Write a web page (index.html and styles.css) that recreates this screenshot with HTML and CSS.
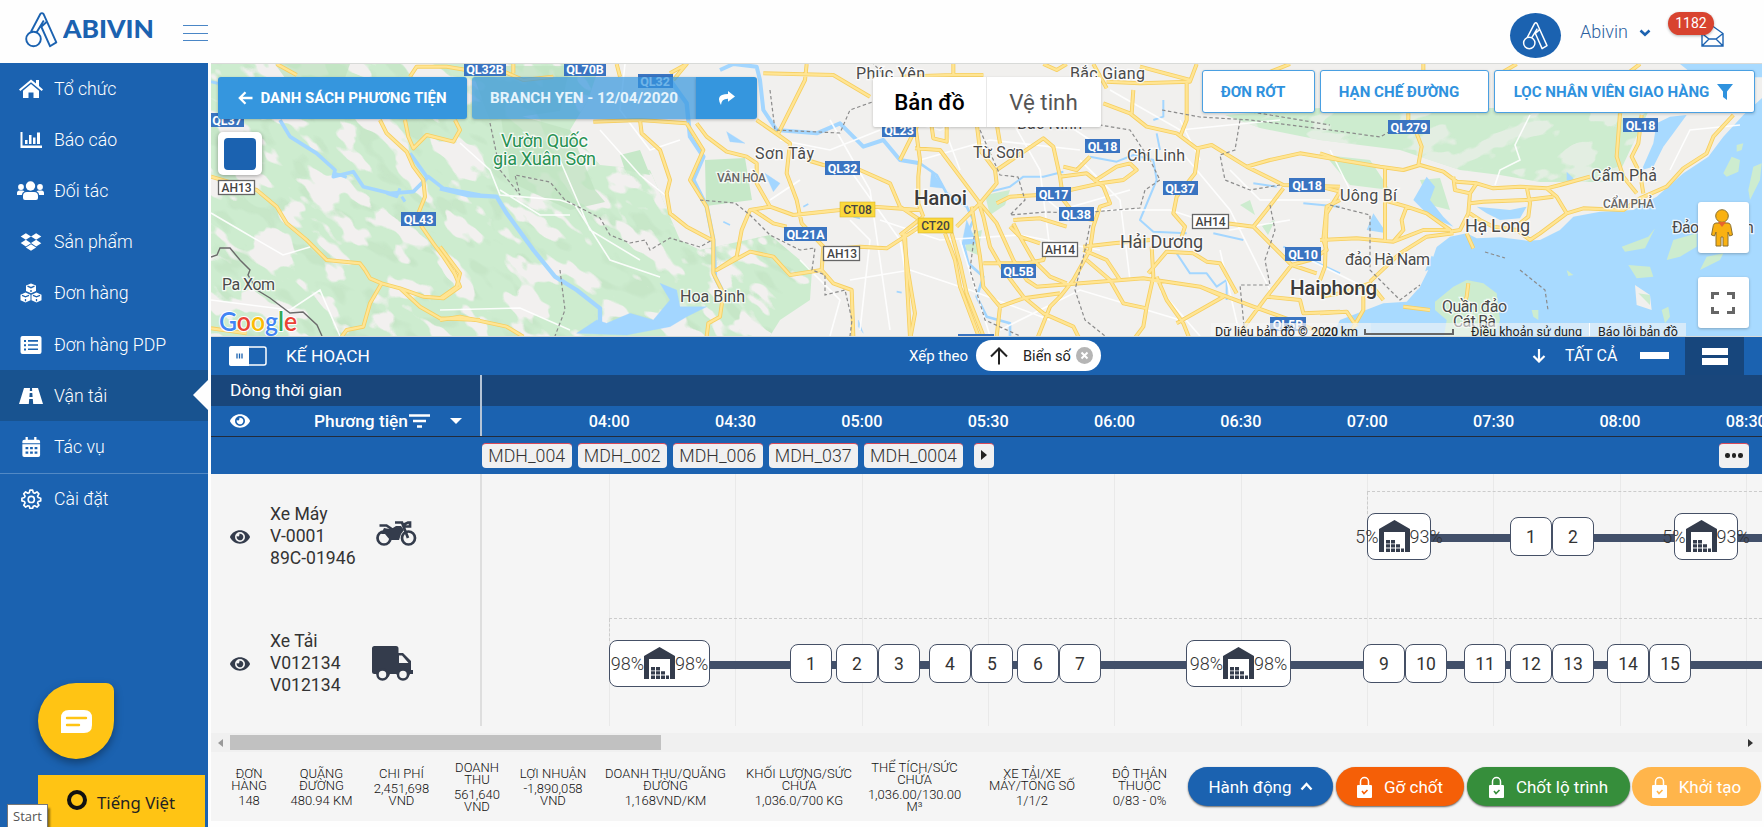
FILE: index.html
```html
<!DOCTYPE html>
<html lang="vi">
<head>
<meta charset="utf-8">
<title>Abivin - Vận tải</title>
<link rel="stylesheet" href="styles.css">
</head>
<body>
<svg class="defs" width="0" height="0">
  <symbol id="eye" viewBox="0 0 576 512"><path d="M572.52 241.4C518.29 135.59 410.93 64 288 64S57.68 135.64 3.48 241.41a32.35 32.35 0 0 0 0 29.19C57.71 376.41 165.07 448 288 448s230.32-71.64 284.52-177.41a32.35 32.35 0 0 0 0-29.19zM288 400a144 144 0 1 1 144-144 143.93 143.93 0 0 1-144 144zm0-240a95.31 95.31 0 0 0-25.31 3.79 47.85 47.85 0 0 1-66.9 66.9A95.78 95.78 0 1 0 288 160z"/></symbol>
  <symbol id="logo" viewBox="0 0 33 36"><g fill="none" stroke="currentColor" stroke-width="1.9" stroke-linejoin="round"><circle cx="8.500" cy="27" r="7.300"/><path d="M6 19.800 15.200 2.200q1.700-2.200 3.400 0L31.300 30.400 25 34.200 16.200 14.500M18.800 8.500 11.500 20.500M22 9.500 15.500 15.500"/></g></symbol>
  <symbol id="depot" viewBox="0 0 31 33"><path d="M0 32V9L15.500 0 31 9v23h-5V12H5v20z"/><path d="M7 20h4v3.500H7zm5 0h4v3.500h-4zM7 24.300h4v3.300H7zm5 0h4v3.300h-4zm5 0h4v3.300h-4zM7 28.500h4V32H7zm5 0h4V32h-4zm5 0h4V32h-4zm5 0h3V32h-3z"/></symbol>
  <symbol id="lock" viewBox="0 0 15 22"><path d="M3.500 9V5.500a4 4 0 0 1 8 0V9" fill="none" stroke="#fff" stroke-width="1.500"/><rect y="9" width="15" height="13" rx="1" fill="#fff"/><path d="m5 15 2 2.500 3.500-3.500" fill="none" stroke="currentColor" stroke-width="1.600"/></symbol>
</svg>

<header class="topbar">
  <svg class="brand-mark" width="33" height="36"><use href="#logo"/></svg>
  <svg class="brand-name" width="96" height="30"><text x="0" y="20" textLength="91" lengthAdjust="spacingAndGlyphs">ABIVIN</text></svg>
  <div class="burger"><i></i><i></i><i></i></div>
  <div class="account">
    <div class="avatar"><svg width="29" height="28"><use href="#logo"/></svg></div>
    <span class="user">Abivin</span>
    <svg class="chev" width="12" height="8" viewBox="0 0 12 8"><path d="m1.500 1.500 4.500 4.300 4.500-4.300" fill="none" stroke="#1b62b0" stroke-width="2.600"/></svg>
    <div class="mail">
      <svg width="23" height="22" viewBox="0 0 23 22"><path d="M1 8.500 11.500 1 22 8.500V21H1zM1 8.500l7 5.500h7l7-5.500M1 21l7-7M22 21l-7-7" fill="none" stroke="#1b62b0" stroke-width="1.400"/></svg>
      <span class="badge">1182</span>
    </div>
  </div>
</header>

<div class="shell">
<nav class="sidebar">
  <a class="item"><svg viewBox="0 0 24 20"><path d="M12 .5 0 10.500l1.300 1.500L12 3.200 22.700 12l1.300-1.500-4-3.400V1h-3v3.600zM12 5 4 11.700V19h5.500v-5.500h5V19H20v-7.300z"/></svg>Tổ chức</a>
  <a class="item"><svg viewBox="0 0 24 20"><path d="M1.500 2h2v13.500H23V18H1.500zM6 10h2.500v4H6zm4-5h2.500v9H10zm4 2.500h2.500V14H14zm4-5h3V14h-3z"/></svg>Báo cáo</a>
  <a class="item"><svg class="wide" viewBox="0 0 27 20"><circle cx="13.500" cy="5" r="4.700"/><circle cx="4" cy="6" r="2.900"/><circle cx="23" cy="6" r="2.900"/><path d="M6 17v-2q0-4 4-4h7q4 0 4 4v2q0 2-2 2H8q-2 0-2-2zM0 14v-2q0-2.500 2.500-2.500h3q1 0 2 .8Q5 11.500 4.800 14zM27 14v-2q0-2.500-2.500-2.500h-3q-1 0-2 .8Q22 11.500 22.200 14z"/></svg>Đối tác</a>
  <a class="item"><svg viewBox="-28 0 584 512"><path d="M264.400 116.300l-132 84.300 132 84.300-132 84.300L0 284.100l132.300-84.300L0 116.300 132.300 32l132.100 84.300zM131.600 395.700l132-84.300 132 84.300-132 84.300-132-84.300zm132.800-111.600l132-84.300-132-83.600L395.700 32 528 116.300l-132.300 84.300L528 284.800l-132.300 84.300-131.300-85z"/></svg>Sản phẩm</a>
  <a class="item"><svg viewBox="0 0 24 20"><path d="m12 .5 5 2v5.500l-5 2.200L7 8V2.500zM6.500 9.500l5 2.200v5.500l-5 2.300-5-2.300v-5.500zM17.500 9.500l5 2.200v5.500l-5 2.300-5-2.300v-5.500z"/><path d="m8.500 3.200 3.500 1.500 3.500-1.500M12 7v2M3 12.400l3.500 1.400 3.500-1.400M6.500 16v2.300M14 12.400l3.500 1.400 3.500-1.400M17.500 16v2.300" fill="none" stroke="#1b62b0" stroke-width="1.300"/></svg>Đơn hàng</a>
  <a class="item"><svg viewBox="0 0 24 20"><path fill-rule="evenodd" d="M3.500 1h17q2 0 2 2v14q0 2-2 2h-17q-2 0-2-2V3q0-2 2-2zM5 5v2h2V5zm4 0v1.700h10V5zM5 9.200v2h2v-2zm4 0v1.600h10V9.200zM5 13.500v2h2v-2zm4 0v1.600h10v-1.600z"/></svg>Đơn hàng PDP</a>
  <a class="item active"><svg viewBox="0 0 24 20"><path fill-rule="evenodd" d="M5 2h6l-.2 3h2.400L13 2h6l5 16h-9.800l-.4-5h-3.600l-.4 5H0zM10.700 7l-.3 4h3.200l-.3-4z"/></svg>Vận tải</a>
  <a class="item"><svg viewBox="0 0 24 22"><path fill-rule="evenodd" d="M6 0h2.500v3h7V0H18v3h2q2 0 2 2v1.800H2.500V5q0-2 2-2H6zM2.500 8H22v12q0 2-2 2H4.500q-2 0-2-2zM6 11v2.500h3V11zm5 0v2.500h3V11zm5 0v2.500h3V11zM6 16v2.500h3V16zm5 0v2.500h3V16zm5 0v2.500h3V16z"/></svg>Tác vụ</a>
  <a class="item last"><svg viewBox="0 0 24 22"><g fill="none" stroke="#fff" stroke-width="1.800" stroke-linejoin="round"><path d="m10.800 1.200 3 0 .7 2.800 1.600.7L18.600 3.200l2.100 2.100-1.500 2.500.7 1.600 2.800.7v3l-2.800.6-.7 1.700 1.500 2.400-2.100 2.100-2.500-1.500-1.600.7-.7 2.200h-3l-.6-2.200-1.700-.7-2.400 1.500L4 17.800l1.500-2.400-.7-1.700L2 13.100v-3l2.800-.7.7-1.600L4 5.300l2.100-2.100 2.400 1.500 1.700-.7z"/><circle cx="12.300" cy="11.500" r="3.400"/></g></svg>Cài đặt</a>
  <div class="chat"><svg width="31" height="23" viewBox="0 0 31 23"><path d="M0 23V8q0-8 8-8h15q8 0 8 8v7q0 8-8 8z" fill="#fff"/><path d="M6 8h19M6 15h12" stroke="#ffc414" stroke-width="2.400" stroke-linecap="round"/></svg></div>
  <div class="lang"><i class="ring"></i>Tiếng Việt</div>
  <div class="tip">Start</div>
</nav>

<main class="main">
<section class="map">
<svg class="mapart" viewBox="211 64 1551 272" width="1551" height="272">
  <defs>
    <filter id="gap" x="0" y="0" width="100%" height="100%" color-interpolation-filters="sRGB"><feTurbulence type="fractalNoise" baseFrequency=".022 .042" numOctaves="3" seed="8"/><feColorMatrix values="0 0 0 0 .948  0 0 0 0 .943  0 0 0 0 .937  18 0 0 0 -9.7"/></filter>
    <filter id="shade" x="0" y="0" width="100%" height="100%" color-interpolation-filters="sRGB"><feTurbulence type="fractalNoise" baseFrequency=".03 .06" numOctaves="2" seed="21"/><feColorMatrix values="0 0 0 0 .72  0 0 0 0 .85  0 0 0 0 .72  9 0 0 0 -5.100"/></filter>
    <clipPath id="west"><path d="M211 64H600L588 100 570 130 600 165 650 170 680 240 700 250 770 235 812 270 810 300 780 320 770 336H211z"/></clipPath>
    <clipPath id="north"><path d="M1225 115 1320 108H1650L1615 182 1540 182 1500 175 1460 170 1400 150 1320 140 1260 128z"/></clipPath>
  </defs>
  <rect x="211" y="64" width="1551" height="272" fill="#f1f0ee"/>
  <g clip-path="url(#west)">
    <rect x="211" y="64" width="620" height="272" fill="#cdeccf"/>
    <rect x="-100" y="-300" width="1100" height="1000" transform="rotate(38 440 200)" filter="url(#shade)" opacity=".3"/>
    <rect x="-100" y="-300" width="1100" height="1000" transform="rotate(38 440 200)" filter="url(#gap)"/>
  </g>
  <path d="M275 64h75l-5 14h-60zM470 66h100l-10 45-70 10zM500 110l70 20 25 60 10 12-35 8-60-28z" fill="#bfe3c0" opacity=".75"/>
  <path d="M705 160 745 158 752 200 706 206zM620 155 640 150 650 175 625 170z" fill="#c6e8c8"/>
  <g clip-path="url(#north)">
    <rect x="1200" y="64" width="500" height="150" fill="#cdeccf"/>
    <rect x="1000" y="-300" width="800" height="900" transform="rotate(-20 1400 150)" filter="url(#gap)" opacity=".6"/>
  </g>
  <path d="M1325 155 1370 160 1390 190 1350 185zM1420 180 1440 178 1450 210 1430 205zM985 195 1010 190 1005 205 990 215zM965 235 982 230 978 255 966 250zM1240 205 1250 200 1255 215zM1262 226 1275 220 1268 235z" fill="#cdeccf"/>

  <!-- sea and bays -->
  <g transform="translate(1320) scale(.33333)" fill="#a8daff">
    <path d="M1330 190V1020H30L60 960 190 910 260 905 300 860 320 800 345 745 390 710 440 700 470 715 540 712 620 722 660 720 720 690 760 650 840 635 940 630 1010 590 1090 520 1165 470 1210 410 1270 345 1330 290z"/>
    <path d="M470 620 570 630 620 620 600 655 540 660 500 640zM965 510 1000 430 1010 370 1050 350 1100 345 1060 400 1030 440 1000 500zM320 530 345 560 330 600 370 650 400 680 330 650 280 600zM1080 192h250v40h-200zM740 515l20 20-5 15-15-10zM160 640l40 60-60-10z"/>
    <g fill="#f1f0ee"><path d="M270 730l40 30-10 60-50 30zM330 700l30 10-20 60-20-10zM300 820l25-10-30 60zM945 855l45 30 5 45-45-15z"/></g>
    <g fill="#cdeccf"><path d="M345 905 400 860 440 840 490 850 530 880 540 960 520 1020H370L380 960 345 930zM1040 780 1060 720 1130 700 1130 740 1080 770zM1210 520 1235 470 1260 480 1255 515 1220 530zM1285 570 1300 500 1325 490 1320 540 1290 600zM925 795 990 800 1000 830 950 835zM740 810l20 15-15 3zM1250 435l20-5-5 20-15 5zM955 880l35 5 0 30zM1025 930l20-10 5 30-15 20zM635 930l20 0 0 30-15-10zM1140 810l60-30 10-20-50 10zM905 740l80-30 20-25-30 60-60 10z"/></g>
  </g>
  <g fill="none" stroke="#a3d6ff" stroke-linejoin="round" transform="scale(.33333)">
    <path d="M840 360 870 410 950 460 1005 510 1000 530 1060 515 1090 560 1170 580 1240 575 1285 530 1330 565 1440 585M1230 460 1280 530" stroke-width="11"/>
    <path d="M1160 580l30 10 10-25M1205 590l10 15M1005 520l35 12M633 245l20 5" stroke-width="9"/>
  </g>
  <g transform="translate(440 60) scale(.33333)" fill="none" stroke="#a3d6ff" stroke-linejoin="round">
    <path d="M0 385 80 405 170 410 200 460 280 570 345 650 410 690 480 745V800" stroke-width="13"/>
    <path d="M410 820 470 780 500 790 570 760 640 780 690 720 660 670 710 690 720 740 800 740 740 770 690 800 560 825zM860 215 915 250 870 245zM975 340 1020 370 1000 395zM1255 780l15 40-15-20z" fill="#a3d6ff"/>
    <path d="M690 60 740 130 750 230 790 290 760 360 800 440 820 540 825 650 850 700" stroke-width="13"/>
    <path d="M840 30 880 12 950 20 960 60 970 150 1010 210 1130 220 1200 190 1270 260 1330 240 1380 300 1440 310" stroke-width="12"/>
    <path d="M1090 440l15-8M850 485l20 10M1240 470l20 5M1370 695l15 3" stroke-width="5"/>
  </g>
  <g transform="translate(900 60) scale(.33333)" fill="none" stroke="#a3d6ff" stroke-linejoin="round">
    <path d="M0 300 60 310 110 345 140 400 200 440 220 480 190 550 205 610 250 650 230 710 260 770 330 790V840" stroke-width="8"/>
    <path d="M95 330 130 385 90 380zM200 480l-15 75 45-5-15-35z" fill="#a3d6ff"/>
    <path d="M270 395 330 380 370 350 430 350 490 335M570 290 650 305 700 285 760 300 770 360 720 480 760 515 860 520M790 120V170L760 180M770 220 780 270M940 520 1030 540M830 580 870 640 920 640 950 680 980 660V720M1060 370 1130 380M1210 430 1320 440M1320 640 1150 560" stroke-width="6"/>
  </g>

  <!-- minor roads -->
  <g fill="none" stroke="#fff" stroke-width="1.600" opacity=".9">
    <path d="M211 213 240 230 283 255 310 247M460 143 490 170 500 195 560 200 575 205 610 260 660 277M560 160 590 230 640 260M600 130 640 175 665 195M440 310 520 308 570 330M211 300 290 310 320 290 340 336M500 190 540 215 570 215M625 64 620 110 650 150 680 140M850 170 900 240 910 300M800 260 840 300 830 336M770 200 800 180M830 120 870 190 890 330M930 90 960 170M960 240 990 336M1000 100 1040 170 1050 250M1080 160 1120 200 1130 280M1180 120 1200 160M1220 250 1240 336M1160 290 1200 336M1330 150 1350 190M1310 260 1370 290M1530 115 1515 145 1520 160 1500 170 1495 185M1670 170 1690 130 1740 125"/>
    <path d="M920 160 990 140 1080 150M880 220 940 240 1020 235 1100 250M850 280 910 270 970 290 1050 320M1000 330 1080 290 1180 320M1090 210 1170 210 1230 230 1290 220M1110 90 1180 130 1280 120M1180 150 1230 210 1270 290M1230 170 1260 200 1330 200M860 330 870 240 850 220M780 140 830 150 880 130M900 120 940 130 970 120M1060 120 1090 140 1120 140M1035 190 1060 210 1130 190"/>
  </g>

  <!-- highways: dark casing below, light fill above -->
  <defs><g id="roads" fill="none" stroke-linejoin="round">
    <g transform="scale(.33333)"><path d="M1140 360 1160 400 1220 455 1240 500 1270 540 1275 590 1255 640 1265 680 1300 730 1330 770 1370 830M1215 360 1225 410 1240 445 1280 405 1360 425 1380 390 1365 360M633 530 770 570 830 620 860 670 920 720 980 780 1080 790 1095 810M830 192 890 225M1230 230 1250 200 1340 200 1400 210"/></g>
    <g transform="translate(0 270) scale(.33333)"><path d="M1095 0 1110 25 1145 40 1110 100 1090 170 1040 180 1025 200M1145 40 1200 55 1260 110 1320 145 1440 150M1360 0 1380 50 1330 85 1270 80 1200 55M633 175 740 190"/></g>
    <g transform="translate(440 60) scale(.33333)"><path d="M600 180 605 220 660 270 690 360 680 400 690 460 740 500 815 540M740 190 790 270 750 360 800 440 820 540 820 640 850 700 840 770 805 790 800 830M770 190 800 230 860 275 920 290 950 310 950 370 990 440 1060 465 1200 450 1300 440 1440 450M950 180 1015 225 1050 250 1040 340 1070 420 1085 490 1150 560 1145 630 1180 670 1235 690 1240 830M970 40 1180 45 1290 110M1100 12 1095 60 1015 220M0 560 60 640 50 680 0 715M0 780 60 770 200 800 250 830M990 440 930 450 905 510 890 590 830 630 930 575 1000 590 1050 645 1145 630M940 450 1000 490 1040 500M1100 300 1150 315 1260 330 1350 370 1380 440 1440 480M1150 570 1260 560 1340 565 1440 500M1395 520 1400 650 1410 830M220 12V40M530 12 540 50M690 40 740 12 700 60M460 185 600 180 740 190M180 30 250 60 340 50M1380 300 1440 180"/></g>
    <g transform="translate(900 60) scale(.33333)">
      <path d="M45 190 60 300 55 350 55 430 70 470M45 265 120 270 180 350 240 430 290 490 340 600 380 660 410 680 730 655 900 680 1060 740 1200 790 1320 850M95 200 100 235 140 245V190M230 190 240 270 285 330 290 370 240 430 170 500M290 190 300 250M290 330 430 235 460 260 480 350 490 420 530 470 580 480M290 430 330 410 420 405M490 320 530 330 570 290M480 350 560 340 610 380 630 430 600 440 580 500 570 570 520 660 480 710 450 740 410 840M510 390 600 370 670 360 710 330 690 310 650 320 580 365M610 130 690 160 740 200 830 220 890 265 935 255 1040 320 1150 375 1320 380M700 90 695 160M620 65 720 70 870 65 890 12M840 230 860 180V65M895 265 885 340 830 410 820 460 855 500 845 530M1040 320 1110 300 1200 280 1320 300M980 490 1060 500 1175 615 1250 640M1060 500 1100 450 1150 385M1320 420 1280 440 1270 540 1280 570 1230 600 1175 615 1100 710 1040 790 1010 840M340 480 420 475 500 500M330 500 360 530 420 550M550 570 620 600 660 660M560 600 630 660 670 730 740 745M550 560 640 550 750 540M755 560 760 650 740 740 730 800 700 840M770 650 800 720 850 790 870 840M745 640 800 575 880 580 920 605 960 610 1010 700M900 680 970 710 830 790M240 440 250 470 270 560 310 630 370 710 430 760 520 800 540 840M215 440 240 590 250 680 300 740 290 830M135 520 165 600 180 680 240 840M155 520 180 610 200 700 255 840M10 520 25 640 45 760 30 840M0 525 70 470M340 490 360 530 400 600 450 650 500 670M250 610 380 610 430 600 440 560M300 740 370 715 480 700M1100 710 1200 720 1210 760 1320 755M1100 40 1170 12M870 60 720 20M160 12V45M430 12 470 30 500 12M0 50 160 45 250 45M620 85 580 12"/>
    </g>
    <g transform="translate(1320) scale(.33333)">
      <path d="M0 460 60 480 180 500 250 510 300 495 370 515 410 545 470 550 520 565 600 560 680 565 720 555 810 530M265 340V360M290 400 305 440 295 495M400 530 405 570 450 580 445 640 420 690 390 695M450 580 470 550M450 610 490 605 620 600 700 590M620 560 630 610 625 650 600 670M680 565 710 590 740 640 660 700 630 720 590 690 520 680 480 660 450 640M740 640 790 625 910 630 960 595 1040 560 1090 505 1160 460 1180 410 1240 345M900 340 890 470 910 530 950 580M965 345 955 430 935 470 960 520 970 580M195 500 195 720M0 720 110 715 220 725 310 690 390 690 320 640 260 620 190 600M260 620 245 660 250 690 220 725M150 845 240 760 320 710 400 700M0 560 60 575M60 575 20 640 15 800 0 840M130 870 130 930 90 1000M0 890 60 880 150 850 190 900M0 940 80 935 110 980M250 920 330 930M445 850 440 890 430 920M440 700 460 745M310 192V215M550 215 590 192M930 215 960 192"/>
    </g>
  </g></defs>
  <use href="#roads" stroke="#f6cf62" stroke-width="12"/>
  <use href="#roads" stroke="#ffe594" stroke-width="7"/>

  <g fill="none" stroke="#8b8b8b" stroke-width="1.200">
    <path d="M211 257 217 255 220 248 230 248 240 260 250 270 248 275 257 290 270 298 290 313 303 312 317 325 322 336" stroke="#6b6b6b" stroke-width="1.400"/>
    <path stroke-dasharray="3.500 2.500" d="M490 123 500 170 520 195 515 175 550 182 565 200 600 218 610 235 630 243 645 240 650 250 670 238 700 247 712 240M700 200 735 203 750 215 770 235 800 250 815 248 812 270 825 275 825 295 845 290 852 320 850 336M560 270 565 310 555 336M770 90 775 130 840 133 850 110 900 92 870 60M980 130 1000 175 1018 177 1025 200 1010 215 1045 212 1080 213 1140 208 1145 190 1160 180 1150 160 1130 130 1100 125M975 230 970 270 985 320 1020 336M1090 225 1085 250 1075 290 1085 320 1105 336M1240 120 1235 150 1220 155 1225 180 1250 190 1280 185M1270 205 1275 230 1265 260 1270 285 1240 285 1245 336M1162 110 1200 117 1250 120 1330 130 1380 137 1410 120M1330 205 1370 215 1370 270 1400 300 1420 285M1485 252 1505 258M1520 270 1545 290 1548 310M1240 110 1330 125"/>
  </g>

  <g class="places">
    <text x="856" y="79" class="p" textLength="69">Phúc Yên</text><text x="1070" y="79" class="p" textLength="75">Bắc Giang</text><text x="1017" y="129" class="p" textLength="65">Bắc Ninh</text>
    <text x="501" y="147" class="park" textLength="87">Vườn Quốc</text><text x="493" y="165" class="park" textLength="103">gia Xuân Sơn</text>
    <text x="755" y="159" class="p" textLength="59">Sơn Tây</text><text x="717" y="182" class="s" textLength="49">VÂN HÒA</text>
    <text x="680" y="302" class="p" textLength="65">Hoa Binh</text><text x="222" y="290" class="p" textLength="53">Pa Xom</text>
    <text x="973" y="158" class="p" textLength="51">Từ Sơn</text><text x="1127" y="161" class="p" textLength="58">Chí Linh</text>
    <text x="914" y="205" class="c" textLength="53">Hanoi</text><text x="1120" y="248" class="m" textLength="83">Hải Dương</text>
    <text x="1290" y="295" class="c" textLength="87">Haiphong</text><text x="1340" y="201" class="p" textLength="57">Uông Bí</text>
    <text x="1345" y="265" class="p" textLength="85">đảo Hà Nam</text><text x="1465" y="232" class="m" textLength="65">Hạ Long</text>
    <text x="1591" y="181" class="p" textLength="66">Cẩm Phả</text><text x="1603" y="208" class="s" textLength="51">CẨM PHẢ</text>
    <text x="1442" y="312" class="p" textLength="65">Quần đảo</text><text x="1453" y="327" class="p" textLength="43">Cát Bà</text>
    <text x="1672" y="233" class="p" textLength="27">Đảo</text><text x="1745" y="233" class="p">n</text>
  </g>
  <g class="ql">
    <g><rect x="464" y="62" width="42" height="14"/><text x="485" y="74">QL32B</text></g>
    <g><rect x="564" y="62" width="42" height="14"/><text x="585" y="74">QL70B</text></g>
    <g><rect x="638" y="74" width="35" height="14"/><text x="655" y="86">QL32</text></g>
    <g><rect x="211" y="113" width="33" height="14"/><text x="227" y="125">QL37</text></g>
    <g><rect x="401" y="212" width="35" height="14"/><text x="418.500" y="224">QL43</text></g>
    <g><rect x="882" y="123" width="34" height="14"/><text x="899" y="135">QL23</text></g>
    <g><rect x="825" y="161" width="35" height="14"/><text x="842.500" y="173">QL32</text></g>
    <g><rect x="784" y="227" width="43" height="14"/><text x="805.500" y="239">QL21A</text></g>
    <g><rect x="1085" y="139" width="35" height="14"/><text x="1102.500" y="151">QL18</text></g>
    <g><rect x="1036" y="187" width="35" height="14"/><text x="1053.500" y="199">QL17</text></g>
    <g><rect x="1059" y="207" width="35" height="14"/><text x="1076" y="219">QL38</text></g>
    <g><rect x="1163" y="181" width="35" height="14"/><text x="1180" y="193">QL37</text></g>
    <g><rect x="1289" y="178" width="36" height="14"/><text x="1307" y="190">QL18</text></g>
    <g><rect x="1285" y="247" width="36" height="14"/><text x="1303" y="259">QL10</text></g>
    <g><rect x="1001" y="264" width="35" height="14"/><text x="1018.500" y="276">QL5B</text></g>
    <g><rect x="1270" y="317" width="36" height="14"/><text x="1288" y="329">QL5B</text></g>
    <g><rect x="1388" y="120" width="42" height="14"/><text x="1409" y="132">QL279</text></g>
    <g><rect x="1623" y="118" width="35" height="14"/><text x="1640.500" y="130">QL18</text></g>
    <rect x="958" y="334" width="36" height="3"/>
  </g>
  <g class="ct">
    <rect x="840" y="202" width="35" height="15"/><text x="857.500" y="214">CT08</text>
    <rect x="918" y="218" width="35" height="15"/><text x="935.500" y="230">CT20</text>
  </g>
  <g class="ah">
    <rect x="218.500" y="180.500" width="36" height="14"/><text x="236.500" y="192">AH13</text>
    <rect x="823.500" y="246.500" width="36" height="14"/><text x="842" y="258">AH13</text>
    <rect x="1042.500" y="242.500" width="35" height="14"/><text x="1060" y="254">AH14</text>
    <rect x="1192.500" y="214.500" width="36" height="14"/><text x="1210.500" y="226">AH14</text>
  </g>
  <rect x="1211" y="323" width="160" height="13" fill="#f5f5f5" opacity=".7"/><rect x="1371" y="323" width="315" height="13" fill="#f5f5f5" opacity=".6"/>
  <g class="credit">
    <text x="1215" y="336" textLength="110">Dữ liệu bản đồ © 20</text><text x="1324" y="336" textLength="34"><tspan font-weight="500">20</tspan> km</text>
    <path d="M1365 329v5h88v-5" fill="none" stroke="#666" stroke-width="2"/>
    <text x="1471" y="336" textLength="111">Điều khoản sử dụng</text><text x="1598" y="336" textLength="80">Báo lỗi bản đồ</text>
  </g>
  <path d="M1589.500 323v13" stroke="#fff"/>
  <text class="google" x="219" y="331" textLength="78" lengthAdjust="spacingAndGlyphs"><tspan fill="#4285f4">G</tspan><tspan fill="#ea4335">o</tspan><tspan fill="#fbbc05">o</tspan><tspan fill="#4285f4">g</tspan><tspan fill="#34a853">l</tspan><tspan fill="#ea4335">e</tspan></text>
</svg>
<div class="map-ui">
  <div class="ui-left">
    <div class="ui-row">
      <button class="btn back"><svg width="15" height="14" viewBox="0 0 15 14"><path d="M14.500 7H2M7.500 1.200 1.800 7l5.700 5.800" fill="none" stroke="#fff" stroke-width="2.300"/></svg>DANH SÁCH PHƯƠNG TIỆN</button>
      <button class="btn branch">BRANCH YEN - 12/04/2020</button>
      <button class="btn share"><svg width="17" height="15" viewBox="0 0 17 15"><path d="M10 0l7 5.500-7 5.300V7.700Q3.500 7.500 3 14-1.500 6.500 4 4q2.500-1 6-1z" fill="#fff"/></svg></button>
    </div>
    <div class="swatch"><i></i></div>
  </div>
  <div class="maptype"><b>Bản đồ</b><span>Vệ tinh</span></div>
  <div class="ui-right">
    <div class="ui-row tight">
      <button class="ghost g1">ĐƠN RỚT</button><button class="ghost g2">HẠN CHẾ ĐƯỜNG</button><button class="ghost g3">LỌC NHÂN VIÊN GIAO HÀNG<svg width="16" height="16" viewBox="0 0 16 16"><path d="M0 0h16L10 7.500V16l-4-3V7.500z" fill="#2f92de"/></svg></button>
    </div>
    <div class="tool peg"><svg width="22" height="38" viewBox="0 0 22 38"><g fill="#f9b112" stroke="#8a7030" stroke-width="1"><path d="M5 14h12q2 0 2.700 2.500l1.800 9.500-3 1-1.500-4v14h-5V28h-2v9H5V23l-1.500 4-3-1 1.800-9.500Q3 14 5 14z"/><circle cx="11" cy="7" r="6.300"/></g><path d="m7 13 4 5 4-5z" fill="#e8642d"/></svg></div>
    <div class="tool full"><svg width="24" height="22" viewBox="0 0 24 22"><path d="M1.500 7V1.500H8M16 1.500h6.500V7M22.500 15v5.500H16M8 20.500H1.500V15" fill="none" stroke="#666" stroke-width="3"/></svg></div>
  </div>
</div>
</section>

<section class="planbar">
  <svg class="toggle" width="38" height="20" viewBox="0 0 38 20"><rect x="1" y="1" width="36" height="18" rx="2" fill="none" stroke="#fff" stroke-width="1.500"/><path d="M0 2q0-2 2-2h18v20H2q-2 0-2-2z" fill="#fff"/><path d="M8 7.500v5M10.500 7.500v5M13 7.500v5" stroke="#1b62b0" stroke-width="1.300"/></svg>
  <span class="plan-title">KẾ HOẠCH</span>
  <span class="sort">Xếp theo</span>
  <span class="pill"><svg width="18" height="18" viewBox="0 0 18 18"><path d="M9 17.500V2M1 9.500 9 1.500l8 8" fill="none" stroke="#222" stroke-width="2"/></svg>Biển số<svg class="x" width="17" height="17" viewBox="0 0 17 17"><circle cx="8.500" cy="8.500" r="8.500" fill="#b5b5b5"/><path d="m5.500 5.500 6 6m0-6-6 6" stroke="#fff" stroke-width="2"/></svg></span>
  <span class="all"><svg width="14" height="14" viewBox="0 0 14 14"><path d="M7 0v12M1.500 7 7 12.500 12.500 7" fill="none" stroke="#fff" stroke-width="2.200"/></svg>TẤT CẢ</span>
  <span class="one"><i></i></span>
  <span class="two"><i></i><i></i></span>
</section>
<section class="strip"><span>Dòng thời gian</span></section>
<section class="hours">
  <div class="hours-left"><svg width="20" height="18" fill="#fff"><use href="#eye"/></svg><span>Phương tiện</span><svg width="21" height="14" viewBox="0 0 21 14"><path d="M0 1.500h21M4 7h13M8 12.500h5" stroke="#fff" stroke-width="2.400"/></svg><i class="caret"></i></div>
  <div class="ticks"><span>04:00</span><span>04:30</span><span>05:00</span><span>05:30</span><span>06:00</span><span>06:30</span><span>07:00</span><span>07:30</span><span>08:00</span><span>08:30</span></div>
</section>
<section class="chips"><span>MDH_004</span><span>MDH_002</span><span>MDH_006</span><span>MDH_037</span><span class="wide4">MDH_0004</span><span class="next"><i></i></span><span class="more"><i></i><i></i><i></i></span></section>

<section class="board">
  <div class="vehicles">
    <div class="vehicle"><svg class="eye" width="20" height="18"><use href="#eye"/></svg><p>Xe Máy<br>V-0001<br>89C-01946</p>
      <svg class="moto" width="41" height="25" viewBox="0 0 41 25"><g fill="none" stroke="#343c4c" stroke-width="2.700"><circle cx="8" cy="17" r="6.500"/><circle cx="32.500" cy="17" r="6.500"/><path d="M19 1.500h7L32 17M3.500 4.500h7l6 4M27 4l5-2.500h2v4h-6"/></g><path d="M8 7q8 2 12-2h5l3 4-3 4-2 6h-9l-5-6H5z" fill="#343c4c"/></svg></div>
    <div class="vehicle"><svg class="eye" width="20" height="18"><use href="#eye"/></svg><p>Xe Tải<br>V012134<br>V012134</p>
      <svg class="truck" width="42" height="35" viewBox="0 0 42 35"><path fill="#343c4c" fill-rule="evenodd" d="M2.500 0H24q2.500 0 2.500 2.500V7H31l8 8v9h2v4h-3a7 7 0 0 1-13.500 0H18A7 7 0 0 1 4.500 28H2.500Q0 28 0 25.500v-23Q0 0 2.500 0zM27 9.500V17h9.500L30 9.500z"/><circle cx="10.500" cy="28.500" r="5" fill="#f5f5f5" stroke="#343c4c" stroke-width="2.500"/><circle cx="31" cy="28.500" r="5" fill="#f5f5f5" stroke="#343c4c" stroke-width="2.500"/></svg></div>
  </div>
  <div class="canvas">
    <div class="route r1">
      <i class="bar"></i>
      <div class="stop depot" style="left:0;width:64px"><span>5%</span><svg width="31" height="33"><use href="#depot"/></svg><span>93%</span></div>
      <div class="stop" style="left:143px">1</div><div class="stop" style="left:185px">2</div>
      <div class="stop depot" style="left:307px;width:64px"><span>5%</span><svg width="31" height="33"><use href="#depot"/></svg><span>93%</span></div>
    </div>
    <div class="route r2">
      <i class="bar"></i>
      <div class="stop depot" style="left:0;width:101px"><span>98%</span><svg width="31" height="33"><use href="#depot"/></svg><span>98%</span></div>
      <div class="stop" style="left:181px">1</div><div class="stop" style="left:227px">2</div><div class="stop" style="left:269px">3</div><div class="stop" style="left:320px">4</div><div class="stop" style="left:362px">5</div><div class="stop" style="left:408px">6</div><div class="stop" style="left:450px">7</div>
      <div class="stop depot" style="left:577px;width:105px"><span>98%</span><svg width="31" height="33"><use href="#depot"/></svg><span>98%</span></div>
      <div class="stop" style="left:754px">9</div><div class="stop" style="left:796px">10</div><div class="stop" style="left:855px">11</div><div class="stop" style="left:901px">12</div><div class="stop" style="left:943px">13</div><div class="stop" style="left:998px">14</div><div class="stop" style="left:1040px">15</div>
    </div>
  </div>
</section>
<div class="scroll"><i class="l"></i><b></b><i class="r"></i></div>
<footer class="stats">
  <div style="width:56px">ĐƠN<br>HÀNG<em>148</em></div>
  <div style="width:89px">QUÃNG<br>ĐƯỜNG<em>480.94 KM</em></div>
  <div style="width:71px">CHI PHÍ<em>2,451,698<br>VND</em></div>
  <div style="width:80px">DOANH<br>THU<em>561,640<br>VND</em></div>
  <div style="width:72px">LỢI NHUẬN<em>-1,890,058<br>VND</em></div>
  <div style="width:153px">DOANH THU/QUÃNG<br>ĐƯỜNG<em>1,168VND/KM</em></div>
  <div style="width:114px">KHỐI LƯỢNG/SỨC<br>CHỨA<em>1,036.0/700 KG</em></div>
  <div style="width:117px">THỂ TÍCH/SỨC<br>CHỨA<em>1,036.00/130.00<br>M³</em></div>
  <div style="width:118px">XE TẢI/XE<br>MÁY/TỔNG SỐ<em>1/1/2</em></div>
  <div style="width:97px">ĐỘ THÂN<br>THUỘC<em>0/83 - 0%</em></div>
  <button class="act a1">Hành động<svg width="13" height="9" viewBox="0 0 13 9"><path d="m1.500 7.500 5-5.500 5 5.500" fill="none" stroke="#fff" stroke-width="2.400"/></svg></button>
  <button class="act a2"><svg width="15" height="22"><use href="#lock"/></svg>Gỡ chốt</button>
  <button class="act a3"><svg width="15" height="22"><use href="#lock"/></svg>Chốt lộ trình</button>
  <button class="act a4"><svg width="15" height="22"><use href="#lock"/></svg>Khởi tạo</button>
</footer>
</main>
</div>
</body>
</html>
```
FILE: styles.css
```css
* { box-sizing: border-box; }
body { margin: 0; width: 1764px; height: 827px; overflow: hidden; background: #fefefe; font-family: Roboto, "Liberation Sans", sans-serif; color: #333; }
svg { display: block; flex: none; }
.defs { position: absolute; }
button { font-family: inherit; border: 0; padding: 0; margin: 0; flex: none; display: flex; align-items: center; justify-content: center; white-space: nowrap; }

.topbar { height: 63px; display: flex; align-items: flex-start; padding-left: 25px; color: #1b62b0; }
.brand-mark { margin-top: 12px; }
.brand-name { margin: 18px 0 0 5px; fill: #1b62b0; font: 900 24px Lato, sans-serif; }
.burger { margin: 25px 0 0 24px; width: 25px; display: flex; flex-direction: column; gap: 6.5px; }
.burger i { height: 1px; background: #4a86c6; }
.account { margin-left: auto; margin-right: 40px; display: flex; }
.avatar { margin-top: 13px; width: 51px; height: 45px; border-radius: 50%; background: #1b62b0; color: #fff; display: flex; align-items: center; justify-content: center; }
.user { margin: 21px 0 0 19px; font-size: 18px; font-weight: 300; line-height: 22px; color: #2c5e9e; width: 59px; }
.chev { margin-top: 29px; }
.mail { position: relative; margin: 25px 0 0 50px; }
.badge { position: absolute; right: 10px; top: -13px; width: 46px; height: 23px; border-radius: 12px; background: #d8432f; color: #fff; font: 14px/22px Roboto, sans-serif; text-align: center; box-shadow: 0 1px 3px rgba(0,0,0,.3); }

.shell { display: flex; height: 764px; }
.sidebar { position: relative; width: 208px; flex: none; background: #1b62b0; }
.item { display: flex; align-items: center; height: 51.2px; padding-left: 20px; gap: 11px; color: #fff; font-size: 17.7px; font-weight: 300; position: relative; }
.item svg { width: 24px; height: 20px; fill: #fff; margin-left: -1px; }
.item svg.wide { width: 27px; margin: 0 -1px 0 -3px; }
.item.active { background: #185390; }
.item.active::after { content: ""; position: absolute; right: 0; top: 10px; border: 15px solid transparent; border-right-color: #fefefe; border-left: 0; }
.item.last { border-top: 1px solid #5289c5; }
.chat { position: absolute; left: 38px; top: 620px; width: 76px; height: 76px; border-radius: 38px 8px 38px 38px; background: #ffc414; box-shadow: 0 4px 8px rgba(0,0,0,.35); display: flex; align-items: center; justify-content: center; }
.lang { position: absolute; left: 38px; top: 712px; width: 167px; height: 52px; background: #ffc414; color: #222; font: 16.8px "Noto Sans", "Open Sans", sans-serif; display: flex; align-items: center; padding: 2px 0 0 29px; gap: 10px; }
.ring { width: 20px; height: 20px; border: 4px solid #111; border-radius: 50%; margin-top: -4px; }
.tip { position: absolute; left: 7px; top: 741px; width: 41px; height: 25px; background: #fff; border: 1px solid #777; color: #555; font: 13px/22px "Open Sans", sans-serif; text-align: center; box-shadow: 2px 4px 2px rgba(0,0,0,.45); }

.main { flex: none; width: 1556px; padding: 0 2px 0 3px; background: #fefefe; display: flex; flex-direction: column; }
.map { position: relative; height: 274px; padding-top: 1px; background: #d8dad8; overflow: hidden; }
.map-ui { position: absolute; inset: 0; display: flex; justify-content: space-between; padding: 7px 7px 0; }
.ui-left { padding-top: 7px; width: 655px; }
.ui-row { display: flex; }
.tight { gap: 5px; }
.btn { height: 42px; background: #3596de; color: #fff; font-size: 15px; font-weight: 700; box-shadow: 0 1px 3px rgba(0,0,0,.25); }
.back { width: 249px; gap: 7px; border-radius: 3px; margin-right: 5px; }
.branch { width: 224px; background: rgba(53,150,222,.7); color: #e6f4fc; border-radius: 3px 0 0 3px; font-size: 15.2px; }
.share { width: 61px; border-radius: 0 3px 3px 0; }
.swatch { margin-top: 13px; width: 44px; height: 43px; background: #fff; border-radius: 5px; padding: 6px 6px 5px; box-shadow: 0 1px 4px rgba(0,0,0,.35); }
.swatch i { display: block; height: 32px; width: 32px; border-radius: 4px; background: #1b62b0; }
.maptype { margin-top: 7px; width: 228px; height: 50px; background: #fff; border-radius: 2px; display: flex; font-size: 22.3px; line-height: 50px; text-align: center; box-shadow: 0 1px 3px rgba(0,0,0,.2); }
.maptype b { width: 114px; font-weight: 500; color: #000; border-right: 1px solid #e8e8e8; }
.maptype span { width: 113px; color: #555; }
.ui-right { width: 654px; display: flex; flex-direction: column; align-items: flex-end; }
.ghost { height: 43px; background: #fff; border: 1px solid #4aa0e2; border-radius: 3px; color: #2f92de; font-size: 15.1px; font-weight: 700; box-shadow: 0 1px 3px rgba(0,0,0,.2); padding-right: 11px; }
.g1 { width: 113px; } .g2 { width: 169px; } .g3 { width: 261px; gap: 8px; padding-right: 2px; }
.tool { width: 51px; height: 51px; background: #fff; border-radius: 3px; margin-right: 6px; display: flex; align-items: center; justify-content: center; box-shadow: 0 1px 3px rgba(0,0,0,.25); padding-right: 2px; }
.peg { margin-top: 89px; padding-right: 3px; } .full { margin-top: 24px; }

.places text { fill: #4a4a4a; stroke: #fff; stroke-width: 2.500px; stroke-opacity: .8; paint-order: stroke; font-size: 16px; }
.places .park { fill: #279152; font-size: 18px; }
.places .s { font-size: 12px; font-weight: 500; fill: #666; }
.places .c { font-size: 20.5px; font-weight: 500; fill: #3c3c3c; }
.places .m { font-size: 18px; }
.ql rect { fill: #3a74c1; }
.ql text { fill: #fff; font-size: 12.5px; font-weight: 700; text-anchor: middle; }
.ct rect { fill: #fbd83c; stroke: #d8b52c; stroke-width: .6px; }
.ct text, .ah text { fill: #444; font-size: 12px; font-weight: 500; text-anchor: middle; }
.ah rect { fill: #fff; stroke: #666; stroke-width: 1.300px; }
.credit text { font-size: 12.5px; fill: #222; }
.google { font: 600 27px Lato, sans-serif; stroke: #fff; stroke-width: 2px; paint-order: stroke; }

.planbar { height: 38px; background: #1b62b0; color: #fff; display: flex; align-items: center; padding-left: 18px; font-size: 16px; padding-bottom: 1px; }
.plan-title { margin-left: 19px; width: 623px; font-size: 17.3px; }
.sort { width: 67px; white-space: nowrap; font-size: 15px; }
.pill { width: 125px; height: 31px; background: #fff; border-radius: 16px; color: #222; display: flex; align-items: center; padding-left: 14px; font-size: 14.6px; gap: 15px; }
.pill .x { margin-left: -10px; }
.all { margin-left: 431px; display: flex; align-items: center; gap: 19px; width: 107px; white-space: nowrap; }
.one { width: 46px; } .one i { display: block; width: 29px; height: 7px; background: #fff; margin-left: 1px; }
.two { width: 59px; height: 38px; margin-bottom: -1px; background: #17467c; display: flex; flex-direction: column; gap: 3px; align-items: center; justify-content: center; }
.two i { width: 26px; height: 7px; background: #fff; }
.strip { height: 31px; background: #19467b; color: #fff; font-size: 17.4px; line-height: 30px; }
.strip span { display: block; width: 271px; height: 31px; padding-left: 19px; border-right: 2px solid #b5c4d6; }
.hours { height: 31px; background: #1b62b0; border-bottom: 1px solid #222c3c; color: #fff; display: flex; font-size: 16.2px; font-weight: 500; }
.hours-left { width: 271px; flex: none; border-right: 2px solid #b5c4d6; display: flex; align-items: center; padding-left: 19px; }
.hours-left span { margin: 0 0 0 64px; width: 95px; white-space: nowrap; font-size: 17.3px; }
.caret { margin-left: 20px; border: 6px solid transparent; border-top-color: #fff; border-bottom: 0; }
.ticks { display: flex; margin-left: 64px; overflow: hidden; flex: 1; }
.ticks span { width: 126.35px; flex: none; text-align: center; line-height: 31px; }
.chips { height: 37px; background: #1b62b0; display: flex; padding: 6px 13px 0 271px; gap: 6px; }
.chips span { width: 89.500px; height: 25px; background: #f0f0f1; border-radius: 4px; border-top: 1px solid #d84a5a; font-size: 17.8px; line-height: 24px; font-weight: 300; text-align: center; color: #333; }
.chips .wide4 { width: 99px; }
.chips .next { width: 20px; margin-left: 5px; padding: 6px 0 0 7px; }
.next i { display: block; width: 0; border: 5.500px solid transparent; border-left: 6px solid #222; border-right: 0; }
.chips .more { margin-left: auto; width: 30px; display: flex; justify-content: center; gap: 2px; padding-top: 9px; }
.more i { width: 4.500px; height: 4.500px; border-radius: 50%; background: #222; }

.board { height: 252px; background: #f5f5f5; display: flex; }
.vehicles { width: 271px; border-right: 2px solid #dedede; flex: none; }
.vehicle { height: 126.500px; display: flex; align-items: center; padding-left: 19px; color: #333; }
.vehicle p { margin: -2px 0 0 20px; width: 102px; font-size: 17.6px; line-height: 22px; font-weight: 400; }
.eye { fill: #343c4c; }
.moto { margin-left: 4px; margin-top: -8px; }
.canvas { position: relative; flex: 1; overflow: hidden; background: repeating-linear-gradient(90deg, #e9e9e9 0 1px, transparent 1px 126.350px) 126.500px 0 no-repeat; }
.route { position: absolute; right: 0; border-top: 1px dashed #ccc; height: 70px; }
.route::before { content: ""; position: absolute; left: 0; top: 0; height: 22px; border-left: 1px dashed #ccc; }
.r1 { left: 885px; top: 17px; } .r2 { left: 127px; top: 144px; }
.bar { position: absolute; left: 40px; right: 0; top: 42px; height: 8px; background: #42506a; }
.stop { position: absolute; top: 25px; width: 42px; height: 39px; border: 1px solid #455066; border-radius: 8px; background: #fff; font-size: 17.5px; color: #333; display: flex; align-items: center; justify-content: center; }
.stop.depot { top: 21px; height: 47px; font-weight: 300; font-size: 18px; }
.depot svg { fill: #343c4c; }
.scroll { margin-top: 7px; height: 19px; background: #f0f0f0; display: flex; align-items: center; padding: 0 9px 0 7px; box-shadow: 0 -7px #f5f5f5; }
.scroll b { width: 431px; height: 15px; background: #c1c1c1; margin-left: 7px; }
.scroll i { border: 4.500px solid transparent; }
.scroll .l { border-right: 5px solid #999; border-left: 0; }
.scroll .r { border-left: 5px solid #333; border-right: 0; margin-left: auto; }
.stats { height: 69px; background: #f5f5f5; display: flex; align-items: center; padding-left: 10px; padding-top: 2px; font-size: 13px; line-height: 12px; text-align: center; }
.stats div { flex: none; white-space: nowrap; font-weight: 300; color: #111; }
.stats em { display: block; font-style: normal; margin-top: 3px; }
.act { height: 39px; border-radius: 20px; color: #fff; font-size: 17px; box-shadow: 0 1px 2px rgba(0,0,0,.6); margin-right: 3px; margin-top: -2px; gap: 12px; }
.a1 { width: 145px; background: #1b62b0; gap: 8px; }
.a2 { width: 128px; background: #f55f07; }
.a2 svg { color: #f55f07; }
.a3 { width: 163px; background: #368e3b; margin-right: 2px; }
.a3 svg { color: #368e3b; }
.a4 { width: 129px; background: #ffb54b; margin-right: 0; box-shadow: none; }
.a4 svg { color: #ffb54b; }
```
